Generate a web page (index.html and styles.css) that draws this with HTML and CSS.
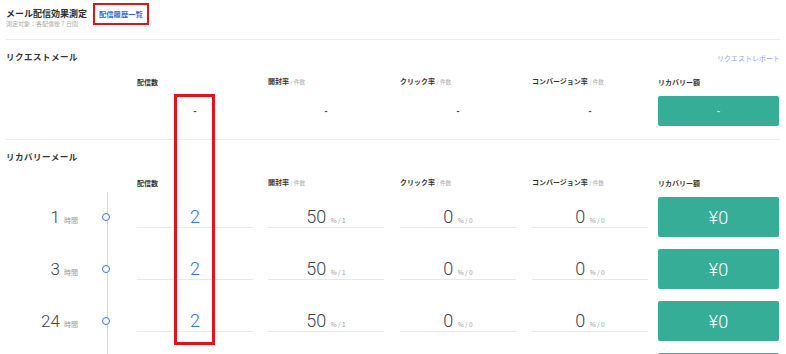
FILE: index.html
```html
<!DOCTYPE html>
<html>
<head>
  <title>メール配信効果測定</title>
  <link rel="stylesheet" href="styles.css">
</head>
<body>
  <div class="page">
    <!-- Page header -->
    <div class="head">
      <div class="title-row">
        <span class="title">メール配信効果測定</span>
        <a class="history-link" href="#">配信履歴一覧</a>
      </div>
      <div class="subtitle">測定対象：各配信後 7 日間</div>
    </div>

    <!-- Request mail -->
    <div class="section">
      <div class="section-title-row">
        <span class="section-title">リクエストメール</span>
        <a class="report-link" href="#">リクエストレポート</a>
      </div>
      <div class="grid col-heads">
        <div></div>
        <div class="col-head">配信数</div>
        <div class="col-head">開封率 <span class="unit">/ 件数</span></div>
        <div class="col-head">クリック率 <span class="unit">/ 件数</span></div>
        <div class="col-head">コンバージョン率 <span class="unit">/ 件数</span></div>
        <div class="col-head">リカバリー額</div>
      </div>
      <div class="grid request-row">
        <div></div>
        <div class="dash">-</div>
        <div class="dash">-</div>
        <div class="dash">-</div>
        <div class="dash">-</div>
        <div class="amount small">-</div>
      </div>
    </div>

    <!-- Recovery mail -->
    <div class="section last">
      <div class="section-title-row">
        <span class="section-title">リカバリーメール</span>
      </div>
      <div class="grid col-heads">
        <div></div>
        <div class="col-head">配信数</div>
        <div class="col-head">開封率 <span class="unit">/ 件数</span></div>
        <div class="col-head">クリック率 <span class="unit">/ 件数</span></div>
        <div class="col-head">コンバージョン率 <span class="unit">/ 件数</span></div>
        <div class="col-head">リカバリー額</div>
      </div>
      <div class="timeline">
        <div class="grid recovery-row">
          <div class="step"><span class="step-label">1 <small>時間</small></span><span class="dot"></span></div>
          <div class="val blue">2</div>
          <div class="val">50 <small>% / 1</small></div>
          <div class="val">0 <small>% / 0</small></div>
          <div class="val">0 <small>% / 0</small></div>
          <div class="amount">¥0</div>
        </div>
        <div class="grid recovery-row">
          <div class="step"><span class="step-label">3 <small>時間</small></span><span class="dot"></span></div>
          <div class="val blue">2</div>
          <div class="val">50 <small>% / 1</small></div>
          <div class="val">0 <small>% / 0</small></div>
          <div class="val">0 <small>% / 0</small></div>
          <div class="amount">¥0</div>
        </div>
        <div class="grid recovery-row">
          <div class="step"><span class="step-label">24 <small>時間</small></span><span class="dot"></span></div>
          <div class="val blue">2</div>
          <div class="val">50 <small>% / 1</small></div>
          <div class="val">0 <small>% / 0</small></div>
          <div class="val">0 <small>% / 0</small></div>
          <div class="amount">¥0</div>
        </div>
        <div class="grid recovery-row">
          <div class="step"></div>
          <div></div>
          <div></div>
          <div></div>
          <div></div>
          <div class="amount"></div>
        </div>
      </div>
    </div>

    <!-- Highlight box over the count column -->
    <div class="highlight"></div>
  </div>
</body>
</html>
```

FILE: styles.css
```css
/* Mail effect page */
body {
  margin: 0;
  background: #fff;
  font-family: "Noto Sans CJK JP", "Noto Sans", sans-serif;
  color: #333;
  overflow: hidden;
}
.page {
  position: relative;
  width: 774px;
  padding: 0 6px;
}
.head {
  height: 40px;
  padding-top: 8px;
  box-sizing: border-box;
  border-bottom: 1px solid #ececec;
}
.title-row {
  display: flex;
  align-items: center;
  height: 12px;
}
.title {
  font-size: 9px;
  font-weight: bold;
  line-height: 12px;
  color: #2e2e2e;
}
.history-link {
  margin: -5px 0 -5px 6px;
  padding: 4px;
  border: 2px solid #e3131b;
  font-size: 7.3px;
  font-weight: bold;
  line-height: 10px;
  color: #3e63e0;
  text-decoration: none;
}
.subtitle {
  font-size: 6px;
  line-height: 8px;
  color: #aaa;
}
.section {
  padding-bottom: 13px;
  border-bottom: 1px solid #ececec;
}
.section.last {
  border-bottom: none;
}
.section-title-row {
  display: flex;
  justify-content: space-between;
  align-items: center;
  margin-top: 10px;
  height: 12px;
}
.section-title {
  font-size: 8.5px;
  font-weight: bold;
  letter-spacing: 0.5px;
  line-height: 12px;
}
.report-link {
  padding-top: 4px;
  font-size: 7px;
  color: #8ea2ee;
  text-decoration: none;
}
.grid {
  display: grid;
  grid-template-columns: 131px 131px 132px 132px 126px 121px;
}
.col-heads {
  margin-top: 14px;
  height: 10px;
  align-items: center;
}
.section.last .col-heads {
  margin-top: 15px;
}
.col-head {
  font-size: 7px;
  font-weight: bold;
  line-height: 10px;
  color: #333;
}
.unit {
  font-size: 5.5px;
  font-weight: normal;
  color: #aaa;
}
.request-row {
  margin-top: 10px;
  height: 30px;
  align-items: center;
}
.dash {
  width: 116px;
  text-align: center;
  font-family: "Roboto", sans-serif;
  font-size: 9px;
  font-weight: bold;
  color: #444;
}
.amount {
  display: flex;
  align-items: center;
  justify-content: center;
  height: 40px;
  background: #36ad97;
  border-radius: 2px;
  color: #fff;
  font-family: "Roboto", sans-serif;
  font-weight: 300;
  font-size: 18px;
}
.amount.small {
  height: 30px;
  font-size: 9px;
  font-weight: bold;
}
.timeline {
  position: relative;
  margin-top: 10px;
}
.timeline::before {
  content: "";
  position: absolute;
  left: 101px;
  top: -5px;
  width: 1px;
  height: 200px;
  background: #d6d9e2;
}
.recovery-row {
  height: 40px;
  margin-bottom: 12px;
}
.step {
  display: flex;
  align-items: center;
}
.step-label {
  width: 72px;
  text-align: right;
  font-family: "Roboto", sans-serif;
  font-weight: 300;
  font-size: 17px;
  color: #3e4350;
}
.step-label small {
  font-family: "Noto Sans CJK JP", sans-serif;
  font-weight: normal;
  font-size: 7px;
  color: #999;
}
.val small {
  font-family: "Noto Sans CJK JP", sans-serif;
  font-weight: normal;
  font-size: 6.5px;
  color: #999;
}
.dot {
  position: relative;
  z-index: 1;
  width: 6px;
  height: 6px;
  margin-left: 24px;
  border: 1.5px solid #3d6ee0;
  border-radius: 50%;
  background: #fff;
}
.val {
  width: 116px;
  height: 20px;
  padding-top: 10px;
  border-bottom: 1px solid #e8e8ea;
  text-align: center;
  font-family: "Roboto", sans-serif;
  font-weight: 300;
  font-size: 18px;
  line-height: 20px;
  color: #3e4350;
}
.val.blue {
  color: #3d6ee0;
}
.highlight {
  position: absolute;
  left: 174px;
  top: 94px;
  width: 41px;
  height: 251px;
  box-sizing: border-box;
  border: 3px solid #e3131b;
}
```
